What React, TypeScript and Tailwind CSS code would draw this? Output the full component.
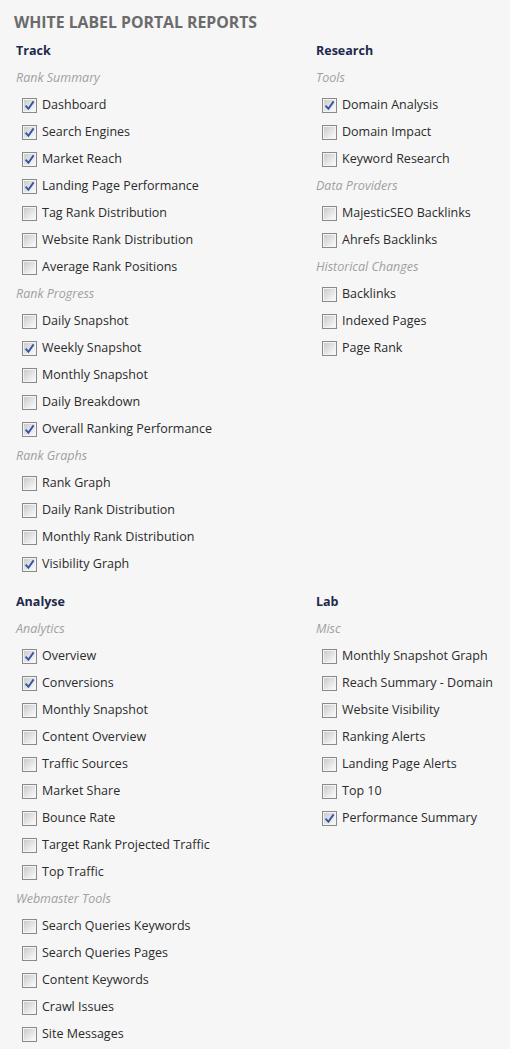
import { FC } from 'react'

type Item = [string, boolean]
type Group = { title: string; items: Item[] }
type Section = { name: string; groups: Group[] }

const track: Section = {
    name: 'Track',
    groups: [
        {
            title: 'Rank Summary',
            items: [
                ['Dashboard', true],
                ['Search Engines', true],
                ['Market Reach', true],
                ['Landing Page Performance', true],
                ['Tag Rank Distribution', false],
                ['Website Rank Distribution', false],
                ['Average Rank Positions', false],
            ],
        },
        {
            title: 'Rank Progress',
            items: [
                ['Daily Snapshot', false],
                ['Weekly Snapshot', true],
                ['Monthly Snapshot', false],
                ['Daily Breakdown', false],
                ['Overall Ranking Performance', true],
            ],
        },
        {
            title: 'Rank Graphs',
            items: [
                ['Rank Graph', false],
                ['Daily Rank Distribution', false],
                ['Monthly Rank Distribution', false],
                ['Visibility Graph', true],
            ],
        },
    ],
}

const research: Section = {
    name: 'Research',
    groups: [
        {
            title: 'Tools',
            items: [
                ['Domain Analysis', true],
                ['Domain Impact', false],
                ['Keyword Research', false],
            ],
        },
        {
            title: 'Data Providers',
            items: [
                ['MajesticSEO Backlinks', false],
                ['Ahrefs Backlinks', false],
            ],
        },
        {
            title: 'Historical Changes',
            items: [
                ['Backlinks', false],
                ['Indexed Pages', false],
                ['Page Rank', false],
            ],
        },
    ],
}

const analyse: Section = {
    name: 'Analyse',
    groups: [
        {
            title: 'Analytics',
            items: [
                ['Overview', true],
                ['Conversions', true],
                ['Monthly Snapshot', false],
                ['Content Overview', false],
                ['Traffic Sources', false],
                ['Market Share', false],
                ['Bounce Rate', false],
                ['Target Rank Projected Traffic', false],
                ['Top Traffic', false],
            ],
        },
        {
            title: 'Webmaster Tools',
            items: [
                ['Search Queries Keywords', false],
                ['Search Queries Pages', false],
                ['Content Keywords', false],
                ['Crawl Issues', false],
                ['Site Messages', false],
            ],
        },
    ],
}

const lab: Section = {
    name: 'Lab',
    groups: [
        {
            title: 'Misc',
            items: [
                ['Monthly Snapshot Graph', false],
                ['Reach Summary - Domain', false],
                ['Website Visibility', false],
                ['Ranking Alerts', false],
                ['Landing Page Alerts', false],
                ['Top 10', false],
                ['Performance Summary', true],
            ],
        },
    ],
}

const CheckBox: FC<{ checked: boolean }> = ({ checked }) => (
    <span className="w-[15px] h-[15px] border border-[#8a8a8a] bg-[#f4f4f4] flex items-center justify-center shrink-0">
        <span className="w-[11px] h-[11px] bg-gradient-to-br from-[#cbcbcb] to-[#fbfbfb] flex items-center justify-center">
            {checked && (
                <svg width="11" height="11" viewBox="0 0 11 11">
                    <path d="M1.6 5.6 L4.4 8.8 L9.6 1.4" fill="none" stroke="#3553a5" strokeWidth="1.9" />
                </svg>
            )}
        </span>
    </span>
)

const SectionBlock: FC<{ section: Section }> = ({ section }) => (
    <div className="flex flex-col">
        <div className="h-[27px] flex items-center font-bold text-[#1d2a4d]">{section.name}</div>
        {section.groups.map((group) => (
            <div key={group.title} className="flex flex-col">
                <div className="h-[27px] flex items-center italic text-[#a0a0a0]">{group.title}</div>
                {group.items.map(([label, checked]) => (
                    <div key={label} className="h-[27px] flex items-center gap-[5px] pl-[6px] text-[#2b2b2b]">
                        <CheckBox checked={checked} />
                        <span>{label}</span>
                    </div>
                ))}
            </div>
        ))}
    </div>
)

const App: FC = () => {
    return (
        <div className="w-[510px] h-[1049px] bg-[#f6f6f6] px-[16px] pt-[9px] text-[12.5px] font-['Open_Sans',sans-serif] overflow-hidden">
            <h1 className="text-[15.8px] font-bold text-[#6b6b6b] h-[27px] flex items-center -ml-[2px] mb-[2px]">
                WHITE LABEL PORTAL REPORTS
            </h1>
            <div className="grid grid-cols-[300px_1fr]">
                <SectionBlock section={track} />
                <SectionBlock section={research} />
            </div>
            <div className="grid grid-cols-[300px_1fr] mt-[11px]">
                <SectionBlock section={analyse} />
                <SectionBlock section={lab} />
            </div>
        </div>
    )
}

export default App
